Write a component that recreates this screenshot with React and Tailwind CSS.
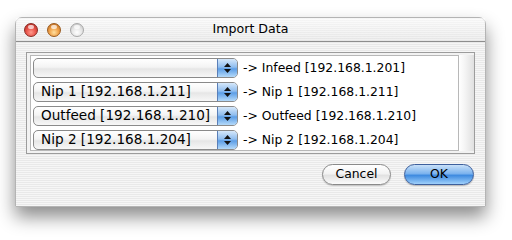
import React from 'react';

const rows = [
  { value: '', target: 'Infeed [192.168.1.201]' },
  { value: 'Nip 1 [192.168.1.211]', target: 'Nip 1 [192.168.1.211]' },
  { value: 'Outfeed [192.168.1.210]', target: 'Outfeed [192.168.1.210]' },
  { value: 'Nip 2 [192.168.1.204]', target: 'Nip 2 [192.168.1.204]' },
];

const stripes =
  'bg-[repeating-linear-gradient(180deg,#e9e9e9_0px,#e9e9e9_1px,#f6f6f6_1px,#f6f6f6_2px)]';

const Light = ({ color }) => {
  const fills = {
    red: 'bg-[radial-gradient(circle_at_50%_70%,#ff9a8c_0%,#e9554b_45%,#a8231c_100%)] border-[#8a2a22]',
    amber: 'bg-[radial-gradient(circle_at_50%_70%,#ffe0a0_0%,#f0a24a_45%,#b8651a_100%)] border-[#9a5a1e]',
    gray: 'bg-[radial-gradient(circle_at_50%_70%,#ffffff_0%,#e4e4e4_50%,#bdbdbd_100%)] border-[#a8a8a8]',
  };
  return (
    <span className={`relative block w-[14px] h-[14px] rounded-full border ${fills[color]}`}>
      <span className="absolute left-[3px] top-[1px] w-[6px] h-[4px] rounded-full bg-white/70" />
    </span>
  );
};

const Popup = ({ value }) => (
  <div className="flex h-[20px] w-[205px] rounded-[5px] border border-[#8a8a8a] overflow-hidden bg-[linear-gradient(180deg,#ffffff_0%,#f4f4f4_45%,#e6e6e6_55%,#f7f7f7_100%)]">
    <div className="flex-1 pl-[7px] flex items-center text-[13.6px] leading-none text-black whitespace-nowrap">
      {value}
    </div>
    <div className="w-[20px] flex flex-col items-center justify-center gap-[2px] border-l border-[#5a7fb8] bg-[linear-gradient(180deg,#d6e8fa_0%,#8fbdef_45%,#5c9ee6_55%,#b5dafa_100%)]">
      <svg width="7" height="4" viewBox="0 0 7 4"><path d="M3.5 0L7 4H0z" fill="#111" /></svg>
      <svg width="7" height="4" viewBox="0 0 7 4"><path d="M0 0h7L3.5 4z" fill="#111" /></svg>
    </div>
  </div>
);

export default function App() {
  return (
    <div className="w-[512px] h-[240px] bg-white pt-[17px] pl-[15px] overflow-hidden" style={{ fontFamily: '"DejaVu Sans", "Liberation Sans", sans-serif' }}>
      <div className={`w-[471px] h-[190px] rounded-t-[7px] border border-[#b4b4b4] ${stripes} shadow-[0_10px_18px_rgba(0,0,0,0.45)] flex flex-col`}>
        <div className="h-[24px] grid grid-cols-[1fr_auto_1fr] items-center border-b border-[#8e8e8e] bg-[linear-gradient(180deg,rgba(255,255,255,0.6),rgba(220,220,220,0.25))]">
          <div className="flex items-center gap-[9px] pl-[8px]">
            <Light color="red" />
            <Light color="amber" />
            <Light color="gray" />
          </div>
          <div className="text-[12.6px] text-black leading-none">Import Data</div>
          <div />
        </div>

        <div className="flex flex-col px-[10px] pt-[10px]">
          <div className="flex border border-[#9c9c9c] bg-[#f2f2f2] pl-[3px] py-[2px] h-[102px]">
            <div className="flex-1 bg-white border border-[#b8b8b8] flex flex-col gap-[4px] pl-[2px] pt-[2px]">
              {rows.map((r, i) => (
                <div key={i} className="flex items-center gap-[5px]">
                  <Popup value={r.value} />
                  <span className="text-[12.4px] leading-none text-black whitespace-nowrap">-&gt; {r.target}</span>
                </div>
              ))}
            </div>
            <div className="w-[15px] bg-[linear-gradient(90deg,#ffffff_0%,#f4f4f4_40%,#e0e0e0_100%)]" />
          </div>

          <div className="flex justify-end gap-[13px] mt-[10px] pr-[1px]">
            <button className="w-[69px] h-[21px] rounded-full border border-[#8a8a8a] text-[12.4px] leading-none text-black bg-[linear-gradient(180deg,#ffffff_0%,#f3f3f3_45%,#e2e2e2_55%,#fbfbfb_100%)] shadow-[0_1px_1px_rgba(0,0,0,0.2)]">
              Cancel
            </button>
            <button className="w-[70px] h-[21px] rounded-full border border-[#3d5f9c] text-[12.4px] leading-none text-black bg-[linear-gradient(180deg,#c8e0f8_0%,#7cb3ee_45%,#3f8be0_55%,#9fd0fb_100%)] shadow-[0_1px_1px_rgba(0,0,0,0.25)]">
              OK
            </button>
          </div>
        </div>
      </div>
    </div>
  );
}
